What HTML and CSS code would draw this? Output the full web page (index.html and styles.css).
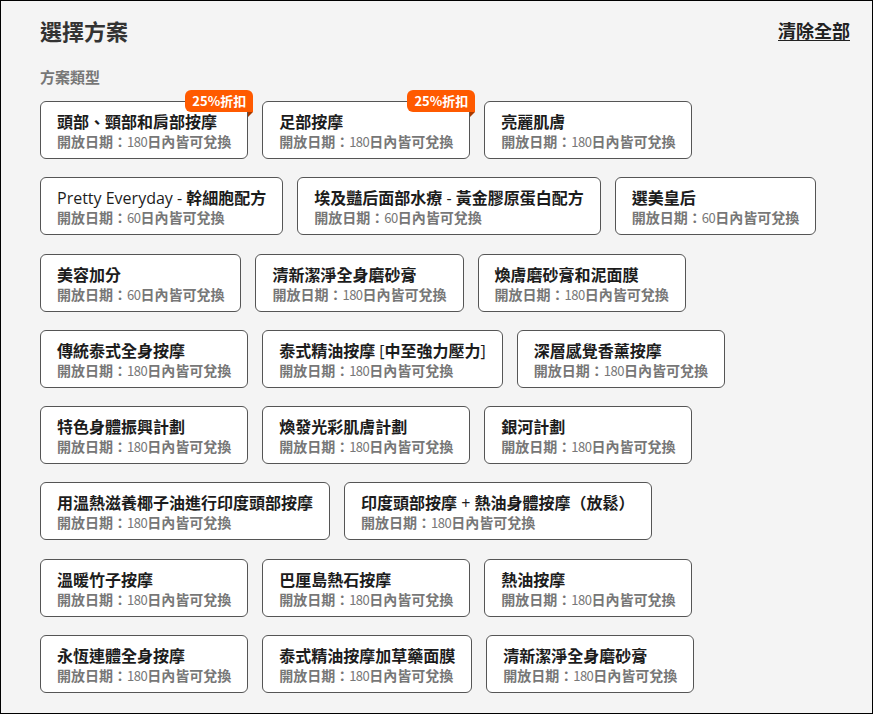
FILE: index.html
```html
<!DOCTYPE html>
<html lang="zh-Hant">
<head>
<meta charset="utf-8">
<title>選擇方案</title>
<link rel="stylesheet" href="styles.css">
</head>
<body>
<div class="page">
  <div class="header">
    <h1 class="title">選擇方案</h1>
    <a class="clear" href="#">清除全部</a>
  </div>
  <div class="label">方案類型</div>
  <div class="plans">
    <div class="card"><span class="badge">25%折扣</span><div class="name">頭部、頸部和肩部按摩</div><div class="sub">開放日期：<span class="num">180</span>日內皆可兌換</div></div>
    <div class="card"><span class="badge">25%折扣</span><div class="name">足部按摩</div><div class="sub">開放日期：<span class="num">180</span>日內皆可兌換</div></div>
    <div class="card"><div class="name">亮麗肌膚</div><div class="sub">開放日期：<span class="num">180</span>日內皆可兌換</div></div>

    <div class="card"><div class="name"><span class="lat">Pretty Everyday - </span>幹細胞配方</div><div class="sub">開放日期：<span class="num">60</span>日內皆可兌換</div></div>
    <div class="card"><div class="name">埃及豔后面部水療<span class="lat"> - </span>黃金膠原蛋白配方</div><div class="sub">開放日期：<span class="num">60</span>日內皆可兌換</div></div>
    <div class="card"><div class="name">選美皇后</div><div class="sub">開放日期：<span class="num">60</span>日內皆可兌換</div></div>

    <div class="card"><div class="name">美容加分</div><div class="sub">開放日期：<span class="num">60</span>日內皆可兌換</div></div>
    <div class="card"><div class="name">清新潔淨全身磨砂膏</div><div class="sub">開放日期：<span class="num">180</span>日內皆可兌換</div></div>
    <div class="card"><div class="name">煥膚磨砂膏和泥面膜</div><div class="sub">開放日期：<span class="num">180</span>日內皆可兌換</div></div>

    <div class="card"><div class="name">傳統泰式全身按摩</div><div class="sub">開放日期：<span class="num">180</span>日內皆可兌換</div></div>
    <div class="card"><div class="name">泰式精油按摩<span class="lat"> [</span>中至強力壓力<span class="lat">]</span></div><div class="sub">開放日期：<span class="num">180</span>日內皆可兌換</div></div>
    <div class="card"><div class="name">深層感覺香薰按摩</div><div class="sub">開放日期：<span class="num">180</span>日內皆可兌換</div></div>

    <div class="card"><div class="name">特色身體振興計劃</div><div class="sub">開放日期：<span class="num">180</span>日內皆可兌換</div></div>
    <div class="card"><div class="name">煥發光彩肌膚計劃</div><div class="sub">開放日期：<span class="num">180</span>日內皆可兌換</div></div>
    <div class="card"><div class="name">銀河計劃</div><div class="sub">開放日期：<span class="num">180</span>日內皆可兌換</div></div>

    <div class="card"><div class="name">用溫熱滋養椰子油進行印度頭部按摩</div><div class="sub">開放日期：<span class="num">180</span>日內皆可兌換</div></div>
    <div class="card"><div class="name">印度頭部按摩<span class="lat"> + </span>熱油身體按摩（放鬆）</div><div class="sub">開放日期：<span class="num">180</span>日內皆可兌換</div></div>

    <div class="card"><div class="name">溫暖竹子按摩</div><div class="sub">開放日期：<span class="num">180</span>日內皆可兌換</div></div>
    <div class="card"><div class="name">巴厘島熱石按摩</div><div class="sub">開放日期：<span class="num">180</span>日內皆可兌換</div></div>
    <div class="card"><div class="name">熱油按摩</div><div class="sub">開放日期：<span class="num">180</span>日內皆可兌換</div></div>

    <div class="card"><div class="name">永恆連體全身按摩</div><div class="sub">開放日期：<span class="num">180</span>日內皆可兌換</div></div>
    <div class="card"><div class="name">泰式精油按摩加草藥面膜</div><div class="sub">開放日期：<span class="num">180</span>日內皆可兌換</div></div>
    <div class="card"><div class="name">清新潔淨全身磨砂膏</div><div class="sub">開放日期：<span class="num">180</span>日內皆可兌換</div></div>
  </div>
</div>
</body>
</html>
```

FILE: styles.css
```css
* { box-sizing: border-box; }
html, body { margin: 0; padding: 0; }
body {
  font-family: "Noto Sans CJK TC", "Open Sans", sans-serif;
  background: #f4f4f4;
  color: #222;
}
.page {
  height: 714px;
  border: 1px solid #000;
  padding: 14px 22px 0 39px;
  overflow: hidden;
}
.header {
  display: flex;
  justify-content: space-between;
  align-items: center;
  height: 30px;
}
.title {
  margin: 0;
  font-size: 22px;
  line-height: 30px;
  font-weight: 700;
  color: #333;
}
.clear {
  font-size: 18px;
  line-height: 24px;
  font-weight: 700;
  color: #222;
  text-decoration: underline;
  text-underline-offset: 2px;
}
.label {
  margin-top: 22px;
  font-size: 15px;
  line-height: 20px;
  font-weight: 700;
  color: #777;
}
.plans {
  margin-top: 14px;
  display: flex;
  flex-wrap: wrap;
  column-gap: 14px;
  row-gap: 18.3px;
  align-items: flex-start;
}
.card {
  position: relative;
  height: 58px;
  background: #fff;
  border: 1px solid #555;
  border-radius: 6px;
  padding: 9px 16px 7px;
  white-space: nowrap;
}
.name {
  height: 20px;
  font-size: 16px;
  line-height: 20px;
  font-weight: 700;
  color: #1c1c1c;
}
.sub {
  height: 20px;
  font-size: 14px;
  line-height: 20px;
  font-weight: 700;
  color: #777;
}
.lat {
  font-family: "Open Sans", sans-serif;
  font-weight: 400;
  line-height: 1;
}
.num {
  font-weight: 400;
  font-size: 13px;
  letter-spacing: -0.5px;
  line-height: 1;
}
.badge {
  position: absolute;
  top: -12px;
  right: -6px;
  height: 22px;
  padding: 0 7px;
  background: #ff5a00;
  color: #fff;
  font-size: 13px;
  line-height: 22px;
  font-weight: 700;
  border-radius: 6px 6px 0 6px;
}
.badge::after {
  content: "";
  position: absolute;
  right: 0;
  top: 100%;
  width: 0;
  height: 0;
  border-top: 5px solid #a83a00;
  border-right: 5px solid transparent;
}
```
